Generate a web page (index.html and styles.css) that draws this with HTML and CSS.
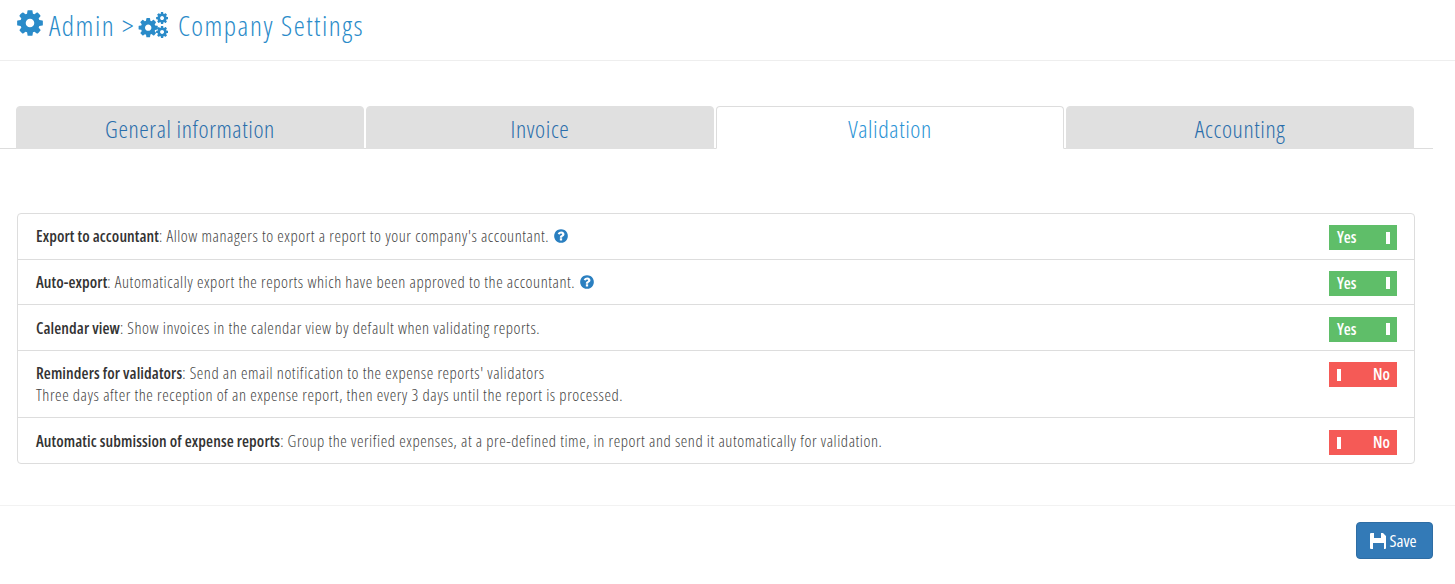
FILE: index.html
```html
<!DOCTYPE html>
<html lang="en">
<head>
  <meta charset="UTF-8" />
  <title>Company Settings</title>
  <link rel="stylesheet" href="styles.css">
</head>
<body>
  <svg class="sprite" xmlns="http://www.w3.org/2000/svg">
    <symbol id="cog" viewBox="0 0 1792 1792"><path d="M1152 896q0-106-75-181t-181-75-181 75-75 181 75 181 181 75 181-75 75-181zm512-109v222q0 12-8 23t-20 13l-185 28q-19 54-39 91 35 50 107 138 10 12 10 25t-9 23q-27 37-99 108t-94 71q-12 0-26-9l-138-108q-44 23-91 38-16 136-29 186-7 28-36 28h-222q-14 0-24.5-8.5t-11.5-21.5l-28-184q-49-16-90-37l-141 107q-10 9-25 9-14 0-25-11-126-114-165-168-7-10-7-23 0-12 8-23 15-21 51-66.5t54-70.5q-27-50-41-99l-183-27q-13-2-21-12.5t-8-23.5v-222q0-12 8-23t19-13l186-28q14-46 39-92-40-57-107-138-10-12-10-24 0-10 9-23 26-36 98.5-107.5t94.5-71.5q13 0 26 10l138 107q44-23 91-38 16-136 29-186 7-28 36-28h222q14 0 24.5 8.5t11.5 21.5l28 184q49 16 90 37l142-107q9-9 24-9 13 0 25 10 129 119 165 170 7 8 7 22 0 12-8 23-15 21-51 66.5t-54 70.5q26 50 41 98l183 28q13 2 21 12.5t8 23.5z"/></symbol>
    <symbol id="help" viewBox="0 0 1792 1792"><path d="M1024 1376v-192q0-14-9-23t-23-9h-192q-14 0-23 9t-9 23v192q0 14 9 23t23 9h192q14 0 23-9t9-23zm256-672q0-88-55.5-163t-138.5-116-170-41q-243 0-371 213-15 24 8 42l132 100q7 6 19 6 16 0 25-12 53-68 86-92 34-24 86-24 48 0 85.5 26t37.5 59q0 38-20 61t-68 45q-63 28-115.5 86.5t-52.5 125.5v36q0 14 9 23t23 9h192q14 0 23-9t9-23q0-19 21.5-49.5t54.5-49.5q32-18 49-28.5t46-35 44.5-48 28-60.5 12.5-81zm384 192q0 209-103 385.5t-279.5 279.5-385.5 103-385.5-103-279.5-279.5-103-385.5 103-385.5 279.5-279.5 385.5-103 385.5 103 279.5 279.5 103 385.5z"/></symbol>
  </svg>

  <header class="page-header">
    <h1>
      <svg class="icon-cog"><use href="#cog"/></svg>
      <span>Admin &gt;</span>
      <svg class="icon-cogs" viewBox="0 0 30 26">
        <use href="#cog" x="0" y="5" width="21" height="21"/>
        <use href="#cog" x="17" y="0" width="13" height="13"/>
        <use href="#cog" x="17" y="13" width="13" height="13"/>
      </svg>
      <span class="title-page">Company Settings</span>
    </h1>
  </header>

  <nav class="tabs">
    <a class="tab">General information</a>
    <a class="tab">Invoice</a>
    <a class="tab active">Validation</a>
    <a class="tab">Accounting</a>
  </nav>

  <section class="settings">
    <div class="row">
      <p><b>Export to accountant</b>: Allow managers to export a report to your company's accountant. <svg class="icon-help"><use href="#help"/></svg></p>
      <div class="toggle on"><span>Yes</span><i></i></div>
    </div>
    <div class="row">
      <p><b>Auto-export</b>: Automatically export the reports which have been approved to the accountant. <svg class="icon-help"><use href="#help"/></svg></p>
      <div class="toggle on"><span>Yes</span><i></i></div>
    </div>
    <div class="row">
      <p><b>Calendar view</b>: Show invoices in the calendar view by default when validating reports.</p>
      <div class="toggle on"><span>Yes</span><i></i></div>
    </div>
    <div class="row tall">
      <p><b>Reminders for validators</b>: Send an email notification to the expense reports' validators<br>Three days after the reception of an expense report, then every 3 days until the report is processed.</p>
      <div class="toggle off"><i></i><span>No</span></div>
    </div>
    <div class="row">
      <p><b>Automatic submission of expense reports</b>: Group the verified expenses, at a pre-defined time, in report and send it automatically for validation.</p>
      <div class="toggle off"><i></i><span>No</span></div>
    </div>
  </section>

  <footer class="page-footer">
    <button class="save">
      <svg viewBox="0 0 16 16"><path d="M0 1q0-1 1-1h3v5h7V0h2l3 3v12q0 1-1 1h-1v-6H3v6H1q-1 0-1-1z"/></svg>
      Save
    </button>
  </footer>
</body>
</html>
```

FILE: styles.css
```css
body {
  margin: 0;
  background: #fff;
  color: #555;
  font-family: "Open Sans", sans-serif;
  font-stretch: 75%;
  font-size: 14px;
  height: 584px;
  overflow: hidden;
}

.sprite {
  display: none;
}

.page-header {
  height: 60px;
  border-bottom: 1px solid #eee;
  padding-left: 16px;
}

h1 {
  margin: 0;
  height: 50px;
  display: flex;
  align-items: center;
  color: #2a8bc9;
  font-size: 28px;
  font-weight: 300;
  letter-spacing: 1.5px;
}

.icon-cog {
  width: 30px;
  height: 30px;
  fill: #2a8bc9;
  margin: -5px 4px 0 -1px;
}

.icon-cogs {
  width: 32px;
  height: 28px;
  fill: #2a8bc9;
  margin: 0 9px 0 2px;
}

.tabs {
  margin: 45px 22px 0 0;
  padding-left: 16px;
  display: flex;
  gap: 2px;
  border-bottom: 1px solid #ddd;
  height: 42px;
}

.tab {
  width: 348px;
  height: 43px;
  box-sizing: border-box;
  background: #e0e0e0;
  border: 1px solid #e0e0e0;
  border-radius: 4px 4px 0 0;
  color: #2a6eab;
  font-size: 24px;
  font-weight: 300;
  letter-spacing: 0.6px;
  line-height: 44px;
  text-align: center;
}

.tab.active {
  background: #fff;
  border-color: #ddd;
  border-bottom-color: #fff;
  color: #2a93d5;
}

.settings {
  margin: 64px 40px 0 17px;
  border: 1px solid #ddd;
  border-radius: 4px;
}

.row {
  display: flex;
  justify-content: space-between;
  align-items: flex-start;
  padding: 11.4px 17px 0 18px;
  height: 45.6px;
  box-sizing: border-box;
  border-bottom: 1px solid #ddd;
}

.row:last-child {
  border-bottom: none;
  padding-top: 12.4px;
}

.row.tall {
  height: 67px;
}

.row p {
  margin: 0;
  line-height: 22px;
  font-size: 16.5px;
  font-weight: 300;
  letter-spacing: 0.55px;
  color: #444;
}

.row b {
  color: #333;
  font-size: 16px;
  font-weight: 600;
  letter-spacing: 0.1px;
}

.icon-help {
  width: 16px;
  height: 16px;
  fill: #2a7fc0;
  vertical-align: -2px;
}

.toggle {
  width: 68px;
  height: 25px;
  display: flex;
  align-items: center;
  justify-content: space-between;
  padding: 0 7px 1px 8px;
  box-sizing: border-box;
  color: #fff;
  font-size: 16px;
  font-weight: 600;
}

.toggle i {
  width: 4px;
  height: 12px;
  background: #fff;
  margin-top: 1px;
}

.toggle.on {
  background: #5fbe69;
}

.toggle.off {
  background: #f55a56;
}

.page-footer {
  margin-top: 41px;
  border-top: 1px solid #f2f2f2;
  padding: 16px 22px 0 0;
  display: flex;
  justify-content: flex-end;
}

.save {
  width: 77px;
  height: 37px;
  display: flex;
  align-items: center;
  justify-content: center;
  gap: 3px;
  padding: 0 2px 0 0;
  background: #337ab7;
  border: 1px solid #2e6da4;
  border-radius: 4px;
  color: #fff;
  font-family: inherit;
  font-stretch: inherit;
  font-size: 17px;
  font-weight: 400;
}

.save svg {
  width: 16px;
  height: 16px;
  fill: #fff;
}
```
